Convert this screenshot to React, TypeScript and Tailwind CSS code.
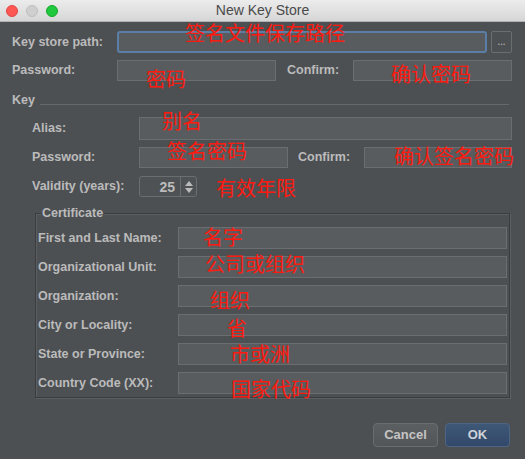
import React from 'react';

const LABEL = "text-[#bbbbbb] text-[12.5px] font-bold [font-family:'Liberation_Sans',Arial,sans-serif] leading-none";
const FIELD = 'h-full bg-[#595c5e] border border-[#6b6e70]';

type Note = { text: string; left: number; top: number };

const NOTES: Note[] = [
  { text: '签名文件保存路径', left: 185, top: 23 },
  { text: '密码', left: 146, top: 69 },
  { text: '确认密码', left: 391, top: 64 },
  { text: '别名', left: 162, top: 111 },
  { text: '签名密码', left: 167, top: 141 },
  { text: '确认签名密码', left: 394, top: 146 },
  { text: '有效年限', left: 216, top: 178 },
  { text: '名字', left: 203, top: 227 },
  { text: '公司或组织', left: 205, top: 254 },
  { text: '组织', left: 210, top: 290 },
  { text: '省', left: 227, top: 318 },
  { text: '市或洲', left: 230, top: 344 },
  { text: '国家代码', left: 231, top: 379 },
];

const CERT_ROWS = [
  'First and Last Name:',
  'Organizational Unit:',
  'Organization:',
  'City or Locality:',
  'State or Province:',
  'Country Code (XX):',
];

function TitleBar() {
  return (
    <div className="relative h-[22px] flex items-center bg-gradient-to-b from-[#ececec] to-[#d6d6d6] border-b border-[#b1b1b1]">
      <div className="flex items-center gap-[8px] pl-[6px]">
        <span className="w-[12px] h-[12px] rounded-full bg-[#fc5753] border border-[#df4744]" />
        <span className="w-[12px] h-[12px] rounded-full bg-[#cfcfcf] border border-[#bdbdbd]" />
        <span className="w-[12px] h-[12px] rounded-full bg-[#1fc83c] border border-[#18a82e]" />
      </div>
      <div className="absolute inset-0 flex items-center justify-center text-[14px] text-[#4a4a4a] [font-family:'Liberation_Sans',Arial,sans-serif]">
        New Key Store
      </div>
    </div>
  );
}

function Spinner() {
  return (
    <div className="w-[58px] h-[21px] flex border border-[#6b6e70] rounded-[3px] bg-[#4f5254]">
      <div className={`flex-1 flex items-center justify-end pr-[5px] ${LABEL} text-[14px]`}>25</div>
      <div className="w-[16px] border-l border-[#6b6e70] flex flex-col items-center justify-center gap-[2px]">
        <svg width="8" height="5" viewBox="0 0 8 5"><path d="M0 5 L4 0 L8 5 Z" fill="#bbbbbb" /></svg>
        <svg width="8" height="5" viewBox="0 0 8 5"><path d="M0 0 L4 5 L8 0 Z" fill="#bbbbbb" /></svg>
      </div>
    </div>
  );
}

export default function App() {
  return (
    <div className="relative w-[525px] h-[459px] overflow-hidden bg-[#4d5053]">
      <TitleBar />

      <div className="pl-[12px] pr-[13px] pt-[9px]">
        {/* keystore path */}
        <div className="flex items-center h-[22px]">
          <span className={`w-[105px] ${LABEL}`}>Key store path:</span>
          <div className="w-[370px] h-[22px] bg-[#595c5e] border-2 border-[#5a7ea5] rounded-[3px]" />
          <div className="ml-[4px] w-[21px] h-[22px] border border-[#6b6e70] rounded-[2px] flex items-center justify-center text-[#bbbbbb] text-[10px] leading-none pb-[2px]">
            ...
          </div>
        </div>

        {/* store password */}
        <div className="flex items-center h-[21px] mt-[7px]">
          <span className={`w-[105px] ${LABEL}`}>Password:</span>
          <div className={`w-[159px] ${FIELD}`} />
          <span className={`ml-[11px] w-[66px] ${LABEL}`}>Confirm:</span>
          <div className={`w-[159px] ${FIELD}`} />
        </div>

        {/* key header */}
        <div className="flex items-center mt-[12px] h-[14px]">
          <span className={`w-[28px] ${LABEL}`}>Key</span>
          <div className="w-[469px] h-px bg-[#66696b] mt-[8px]" />
        </div>

        <div className="pl-[20px]">
          <div className="flex items-center h-[23px] mt-[10px]">
            <span className={`w-[107px] ${LABEL}`}>Alias:</span>
            <div className={`w-[373px] ${FIELD}`} />
          </div>

          <div className="flex items-center h-[21px] mt-[7px]">
            <span className={`w-[107px] ${LABEL}`}>Password:</span>
            <div className={`w-[149px] ${FIELD}`} />
            <span className={`ml-[10px] w-[66px] ${LABEL}`}>Confirm:</span>
            <div className={`w-[148px] ${FIELD}`} />
          </div>

          <div className="flex items-center h-[21px] mt-[8px]">
            <span className={`w-[107px] ${LABEL}`}>Validity (years):</span>
            <Spinner />
          </div>

          {/* certificate group */}
          <div className="relative ml-[3px] mt-[16px] w-[475px] h-[185px] border border-[#3a3c3e] shadow-[1px_1px_0_#5c5f62,inset_1px_1px_0_#5c5f62] pt-[13px] pl-[2px]">
            <span className={`absolute -top-[7px] left-[5px] px-[1px] bg-[#4d5053] ${LABEL}`}>Certificate</span>
            <div className="flex flex-col gap-[7px]">
              {CERT_ROWS.map((label) => (
                <div key={label} className="flex items-center h-[22px]">
                  <span className={`w-[140px] ${LABEL}`}>{label}</span>
                  <div className={`w-[329px] ${FIELD}`} />
                </div>
              ))}
            </div>
          </div>
        </div>

        {/* buttons */}
        <div className="flex justify-end gap-[7px] mt-[25px] pr-[2px]">
          <button className="w-[65px] h-[24px] rounded-[4px] border border-[#6a6d70] bg-gradient-to-b from-[#5c5f61] to-[#535658] text-[#c4c4c4] text-[13px] font-bold [font-family:'Liberation_Sans',Arial,sans-serif]">
            Cancel
          </button>
          <button className="w-[65px] h-[24px] rounded-[4px] border border-[#4c6585] bg-gradient-to-b from-[#3f5877] to-[#32486a] text-[#cfd3d8] text-[13px] font-bold [font-family:'Liberation_Sans',Arial,sans-serif]">
            OK
          </button>
        </div>
      </div>

      {/* red annotations */}
      {NOTES.map((n) => (
        <span
          key={n.text}
          className="absolute text-[20px] leading-[20px] text-[#ff1a10] [font-family:'Noto_Sans_CJK_SC',sans-serif] whitespace-nowrap"
          style={{ left: n.left, top: n.top }}
        >
          {n.text}
        </span>
      ))}
    </div>
  );
}
